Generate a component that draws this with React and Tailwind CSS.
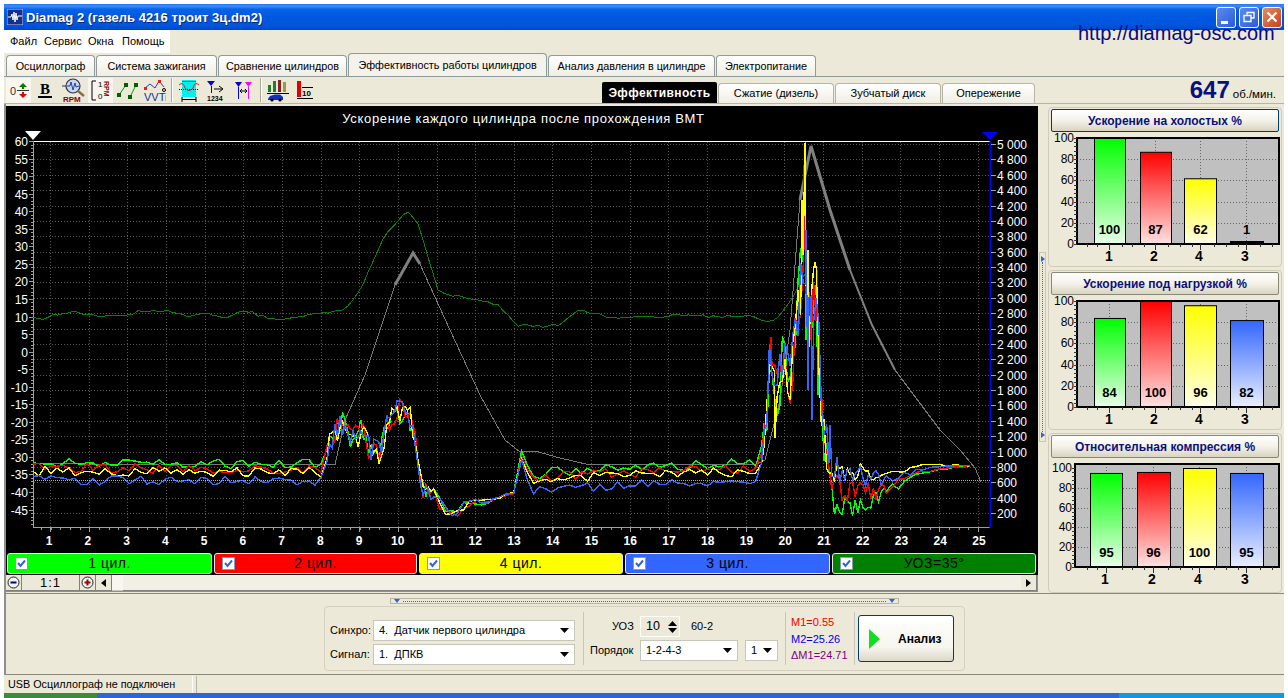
const tabs = [
  { label: 'Осциллограф', w: 89 },
  { label: 'Система зажигания', w: 121 },
  { label: 'Сравнение цилиндров', w: 129 },
  { label: 'Эффективность работы цилиндров', w: 199, active: true },
  { label: 'Анализ давления в цилиндре', w: 167 },
  { label: 'Электропитание', w: 100 },
];

const subTabs = [
  { label: 'Сжатие (дизель)', w: 116 },
  { label: 'Зубчатый диск', w: 106 },
  { label: 'Опережение', w: 93 },
];

const legend = [
  { label: '1 цил.', w: 'w-[205px]', bg: 'bg-[#00ff00]' },
  { label: '2 цил.', w: 'w-[203px]', bg: 'bg-[#ff0000]' },
  { label: '4 цил.', w: 'w-[204px]', bg: 'bg-[#ffff00]' },
  { label: '3 цил.', w: 'w-[205px]', bg: 'bg-[#3366ff]' },
  { label: 'УОЗ=35°', w: 'w-[204px]', bg: 'bg-[#008000]' },
];

// piecewise-linear lookup
const lerp = (pts, x) => {
  if (x <= pts[0][0]) return pts[0][1];
  for (let i = 1; i < pts.length; i++) {
    if (x <= pts[i][0]) {
      const [x0, y0] = pts[i - 1];
      const [x1, y1] = pts[i];
      return y0 + ((y1 - y0) * (x - x0)) / (x1 - x0);
    }
  }
  return pts[pts.length - 1][1];
};

const rng = (seed) => () => {
  seed = (seed + 0x6d2b79f5) | 0;
  let t = Math.imul(seed ^ (seed >>> 15), 1 | seed);
  t = (t + Math.imul(t ^ (t >>> 7), 61 | t)) ^ t;
  return ((t ^ (t >>> 14)) >>> 0) / 4294967296;
};

const envelope = [
  [33, 466], [322, 467], [330, 440], [345, 421], [353, 441], [362, 430], [370, 450], [380, 455], [387, 425],
  [397, 412], [407, 412], [415, 432], [417, 465], [423, 490], [433, 493], [443, 508], [457, 512], [467, 503],
  [480, 503], [500, 497], [517, 492], [520, 452], [533, 478], [553, 474], [760, 466], [767, 413], [770, 352],
  [777, 395], [783, 360], [790, 385], [797, 330], [805, 230], [809, 330], [817, 295], [820, 380], [823, 430],
  [830, 463], [835, 480], [853, 478], [873, 482], [893, 479], [920, 471], [953, 467], [977, 466],
];

const amplitude = [
  [33, 5], [322, 5], [335, 13], [410, 13], [420, 8], [470, 4], [500, 2], [517, 1], [520, 4], [545, 5], [760, 5],
  [770, 22], [800, 42], [815, 42], [830, 18], [850, 11], [895, 6], [920, 1.5], [977, 0.5],
];

const calm = [[33, 1], [322, 1], [332, 0], [517, 0], [530, 1], [756, 1], [768, 0], [977, 0]];

const cylinders = [
  {
    color: '#00ff00', seed: 11, calm: -3, after: [[825, 0], [833, 30], [850, 32], [880, 16], [910, 2], [977, 0]],
    spikes: [[803, 262], [806, 340], [818, 395]],
  },
  {
    color: '#ff0000', seed: 23, calm: 2, after: [[825, 0], [838, 12], [880, 10], [915, 1], [977, 0]],
    spikes: [[771, 337], [804, 165], [807, 300], [817, 270]],
  },
  {
    color: '#ffff00', seed: 37, calm: 5, after: [[825, 0], [840, -8], [890, -7], [960, -2], [977, 0]],
    spikes: [[775, 438], [802, 200], [805, 143], [808, 250], [815, 262], [818, 325]],
  },
  {
    color: '#3366ff', seed: 51, calm: 14, after: [[825, 0], [835, -12], [850, -4], [977, 0]],
    spikes: [[806, 230], [808, 390], [812, 420], [830, 425]],
  },
];

const tracePoints = ({ seed, calm: calmShift, after, spikes }) => {
  const rand = rng(seed);
  const pts = [];
  let x = 33;
  while (x < 977) {
    const amp = lerp(amplitude, x);
    const shift = lerp(calm, x) * calmShift + lerp(after, x);
    pts.push([x, lerp(envelope, x) + shift + (rand() - 0.5) * 2 * amp]);
    x += amp > 7 ? 2.6 : amp > 2 ? 6 : 8;
  }
  spikes.forEach((s) => pts.push(s));
  pts.sort((a, b) => a[0] - b[0]);
  return pts.map(([px, py]) => `${px.toFixed(1)},${Math.min(526, Math.max(143, py)).toFixed(1)}`).join(' ');
};

const rpmThin = '33,464 60,463 100,465 160,464 220,465 280,464 335,465 345,420 365,375 395,285';
const rpmThick1 = '395,285 413,253 420,264';
const rpmThin2 = '420,264 450,330 480,395 505,440 520,452 535,451 560,458 590,465 650,464 755,465 765,460 780,400 790,330 800,200';
const rpmThick2 = '800,200 811,146 830,210 850,270';
const rpmMid2 = '850,270 872,325 895,370';
const rpmThin3 = '895,370 940,430 960,450 975,468 981,482';

const uozPts = [
  [33, 318], [40, 320], [55, 315], [65, 312], [90, 314], [105, 317], [125, 316], [135, 312], [155, 312], [175, 312],
  [190, 317], [205, 313], [225, 318], [245, 311], [265, 317], [285, 320], [300, 316], [330, 312], [345, 310],
  [360, 290], [385, 235], [407, 211], [418, 225], [438, 290], [445, 295], [470, 298], [500, 305], [515, 325],
  [535, 327], [560, 325], [580, 310], [610, 317], [640, 318], [680, 315], [720, 317], [745, 315], [773, 322],
  [785, 310], [800, 283], [806, 270],
];
const uozRand = rng(77);
const uoz = Array.from({ length: 156 }, (_, i) => {
  const x = 33 + i * 5;
  return `${x},${(lerp(uozPts, x) + (uozRand() - 0.5) * 3).toFixed(1)}`;
}).join(' ');

const rightAxis = Array.from({ length: 25 }, (_, i) => 5000 - i * 200);
const leftAxis = Array.from({ length: 22 }, (_, i) => 60 - i * 5).filter((v) => v >= -45);
const yLeft = (v) => Math.round(141 + (60 - v) * 3.51);
const yRight = (i) => Math.round(144 + i * 15.38);
const xGrid = (i) => Math.round(50 + i * 38.65);

const MainChart = () => (
  <svg width="1032" height="423" viewBox="6 130 1032 423" className="block">
    {rightAxis.map((_, i) => (
      <line key={i} x1="34" x2="990" y1={yRight(i) + 0.5} y2={yRight(i) + 0.5} stroke="#5a5a5a" strokeDasharray="1 2" />
    ))}
    {Array.from({ length: 25 }, (_, i) => (
      <line key={i} x1={xGrid(i) + 0.5} x2={xGrid(i) + 0.5} y1="142" y2="527" stroke="#5a5a5a" strokeDasharray="1 2" />
    ))}
    <line x1="33" x2="991" y1="141.5" y2="141.5" stroke="#ffffff" />
    <line x1="33" x2="991" y1="527.5" y2="527.5" stroke="#a0a0a0" />
    <line x1="33.5" x2="33.5" y1="141" y2="528" stroke="#a0a0a0" strokeWidth="1" />
    <line x1="990.5" x2="990.5" y1="141" y2="528" stroke="#0000ff" strokeWidth="2" />
    {Array.from({ length: 110 }, (_, i) => (
      <line key={i} x1="31" x2="33" y1={Math.round(141 + i * 3.51) + 0.5} y2={Math.round(141 + i * 3.51) + 0.5} stroke="#a0a0a0" />
    ))}
    {Array.from({ length: 98 }, (_, i) => (
      <line key={i} x1={Math.round(41 + i * 9.66) + 0.5} x2={Math.round(41 + i * 9.66) + 0.5} y1="528" y2="530" stroke="#a0a0a0" />
    ))}
    {leftAxis.map((v) => (
      <g key={v}>
        <line x1="29" x2="33" y1={yLeft(v) + 0.5} y2={yLeft(v) + 0.5} stroke="#a0a0a0" />
        <text x="28" y={yLeft(v) + 4.5} textAnchor="end" fill="#ffffff" fontSize="12">{v}</text>
      </g>
    ))}
    {rightAxis.map((v, i) => (
      <g key={v}>
        <line x1="991" x2="996" y1={yRight(i) + 0.5} y2={yRight(i) + 0.5} stroke="#a0a0a0" />
        <text x="997" y={yRight(i) + 4.5} fill="#ffffff" fontSize="12">
          {v >= 1000 ? `${Math.floor(v / 1000)} ${String(v % 1000).padStart(3, '0')}` : v}
        </text>
      </g>
    ))}
    {Array.from({ length: 25 }, (_, i) => (
      <g key={i}>
        <line x1={xGrid(i) + 0.5} x2={xGrid(i) + 0.5} y1="528" y2="532" stroke="#a0a0a0" />
        <text x={49 + i * 38.75} y="545" textAnchor="middle" fill="#ffffff" fontSize="12" fontWeight="700">{i + 1}</text>
      </g>
    ))}

    <polyline points={rpmThin} fill="none" stroke="#787878" strokeWidth="1" shapeRendering="crispEdges" />
    <polyline points={rpmThin2} fill="none" stroke="#787878" strokeWidth="1" shapeRendering="crispEdges" />
    <polyline points={rpmThin3} fill="none" stroke="#787878" strokeWidth="1" shapeRendering="crispEdges" />
    <polyline points={rpmThick1} fill="none" stroke="#808080" strokeWidth="3" />
    <polyline points={rpmThick2} fill="none" stroke="#808080" strokeWidth="3" />
    <polyline points={rpmMid2} fill="none" stroke="#808080" strokeWidth="2" />
    <line x1="805.5" x2="805.5" y1="142" y2="180" stroke="#9a9a9a" />
    <polyline points={uoz} fill="none" stroke="#0a800a" strokeWidth="1" shapeRendering="crispEdges" />
    {cylinders.map((c) => (
      <polyline key={c.seed} points={tracePoints(c)} fill="none" stroke={c.color} strokeWidth="1.4" shapeRendering="crispEdges" />
    ))}
    <line x1="33" x2="990" y1="480.5" y2="480.5" stroke="#33ddff" strokeDasharray="1 1" />

    <polygon points="25,131 41,131 33,140" fill="#ffffff" />
    <polygon points="982,132 998,132 990,140" fill="#0000ff" />
  </svg>
);

const barFills = { g: 'url(#fillG)', r: 'url(#fillR)', y: 'url(#fillY)', b: 'url(#fillB)' };

const BarChart = ({ left, top, scaleTop, bottom, bars, id }) => {
  const h = bottom - scaleTop;
  return (
    <svg width="232" height="134" viewBox={`1049 ${top - 6} 232 134`} className="block">
      <rect x={left} y={top} width={1277 - left} height={bottom - top} fill="#c0c0c0" />
      {[80, 60, 40, 20].map((v) => {
        const y = Math.round(bottom - (v * h) / 100) + 0.5;
        return <line key={v} x1={left} x2="1277" y1={y} y2={y} stroke="#666666" strokeDasharray="1 2" />;
      })}
      {bars.map((b) => (
        <line key={b.x0} x1={b.vx + 0.5} x2={b.vx + 0.5} y1={top} y2={bottom} stroke="#666666" strokeDasharray="1 2" />
      ))}
      {bars.map((b) => {
        const y = b.v < 3 ? bottom - 3 : bottom - (b.v * h) / 100;
        return (
          <rect key={`${id}${b.x0}`} x={b.x0 + 0.5} y={y + 0.5} width={b.x1 - b.x0} height={Math.max(bottom - y - 1, 0.5)} fill={b.v < 3 ? '#000000' : barFills[b.c]} stroke="#000000" />
        );
      })}
      <rect x={left} y={top} width={1277 - left} height={bottom - top} fill="none" stroke="#000000" strokeWidth="2" />
      {Array.from({ length: 26 }, (_, i) => {
        const y = Math.round(bottom - (i * 4 * h) / 100) + 0.5;
        return <line key={i} x1={left - 3} x2={left} y1={y} y2={y} stroke="#333333" />;
      })}
      {[1085, 1095, 1120, 1130, 1142, 1166, 1178, 1190, 1212, 1224, 1236, 1258, 1270].map((x) => (
        <line key={x} x1={x + 0.5} x2={x + 0.5} y1={bottom} y2={bottom + 3} stroke="#333333" />
      ))}
      {[100, 80, 60, 40, 20, 0].map((v) => (
        <text key={v} x={left - 3} y={bottom - (v * h) / 100 + 4} textAnchor="end" fontSize="12" fill="#000000">{v}</text>
      ))}
      {bars.map((b) => (
        <g key={b.label}>
          <line x1={b.vx + 0.5} x2={b.vx + 0.5} y1={bottom} y2={bottom + 6} stroke="#333333" />
          <text x={b.vx + 0.5} y={bottom - 10} textAnchor="middle" fontSize="13" fontWeight="700" fill="#000000">{b.v}</text>
          <text x={b.lx} y={bottom + 17} textAnchor="middle" fontSize="14" fontWeight="700" fill="#000000">{b.label}</text>
        </g>
      ))}
    </svg>
  );
};

const Panel = ({ title, active, children }) => (
  <div className="h-[160px] rounded-[4px] border border-[#d0ccb8] px-[2px] pt-[1px]">
    <div
      className={`flex h-[23px] items-center justify-center rounded-[2px] border bg-[linear-gradient(180deg,#ffffff_0%,#f4f2e8_50%,#d8d4c0_100%)] text-[12px] font-bold text-[#0a1080] ${
        active ? 'border-[#003c74]' : 'border-[#8a8878]'
      }`}
    >
      {title}
    </div>
    {children}
  </div>
);

const barX = [
  { x0: 1092, x1: 1123, vx: 1107, lx: 1107, c: 'g', label: '1' },
  { x0: 1138, x1: 1169, vx: 1153, lx: 1152, c: 'r', label: '2' },
  { x0: 1182, x1: 1214, vx: 1198, lx: 1197, c: 'y', label: '4' },
  { x0: 1228, x1: 1261, vx: 1244, lx: 1243, c: 'b', label: '3' },
];
const barX3 = [
  { x0: 1088, x1: 1120, vx: 1104, lx: 1103, c: 'g', label: '1' },
  { x0: 1135, x1: 1168, vx: 1151, lx: 1150, c: 'r', label: '2' },
  { x0: 1181, x1: 1214, vx: 1197, lx: 1196, c: 'y', label: '4' },
  { x0: 1228, x1: 1261, vx: 1244, lx: 1243, c: 'b', label: '3' },
];
const withValues = (xs, vals) => xs.map((b, i) => ({ ...b, v: vals[i] }));

const Triangle = ({ className = '' }) => (
  <svg width="9" height="5" viewBox="0 0 9 5" className={className}><polygon points="0,0 9,0 4.5,5" fill="#000000" /></svg>
);

const Combo = ({ text, w }) => (
  <div className={`flex h-[21px] items-center justify-between border border-[#c8c6b8] bg-white pl-[5px] pr-[5px] text-[11px] text-black ${w}`}>
    <span className="whitespace-pre">{text}</span>
    <Triangle />
  </div>
);

const IconZero = () => (
  <svg width="24" height="24" viewBox="0 0 24 24">
    <text x="3" y="17" fontSize="11" fill="#333333">0</text>
    <polygon points="16,5 20,9 12,9" fill="#008000" />
    <rect x="15" y="9" width="2" height="2" fill="#008000" />
    <rect x="10" y="12" width="12" height="1" fill="#333333" />
    <rect x="15" y="14" width="2" height="2" fill="#e00000" />
    <polygon points="12,16 20,16 16,20" fill="#e00000" />
  </svg>
);

const IconBold = () => (
  <svg width="16" height="24" viewBox="0 0 16 24">
    <text x="8" y="16" textAnchor="middle" fontSize="15" fontWeight="700" fontFamily="'Liberation Serif', serif" fill="#000000">B</text>
    <rect x="1" y="18" width="14" height="2" fill="#000000" />
  </svg>
);

const IconRpm = () => (
  <svg width="24" height="26" viewBox="0 0 24 26">
    <circle cx="11" cy="9" r="7" fill="#c8d8f0" stroke="#303050" strokeWidth="1.2" />
    <path d="M5 9 L8 9 L9 5 L11 13 L13 6 L14 10 L17 9" fill="none" stroke="#2040a0" />
    <line x1="16" y1="14" x2="22" y2="19" stroke="#8a7040" strokeWidth="2.4" />
    <line x1="0" y1="9" x2="4" y2="9" stroke="#303050" />
    <text x="1" y="25" fontSize="8" fontWeight="700" fill="#8b0000">RPM</text>
  </svg>
);

const IconScale = () => (
  <svg width="24" height="24" viewBox="0 0 24 24">
    <path d="M7 3 H3 V22 H7" fill="none" stroke="#000000" />
    <text x="9" y="9" fontSize="8" fill="#000000">1</text>
    <text x="9" y="21" fontSize="8" fill="#000000">0</text>
    <text x="0" y="0" fontSize="7" fontWeight="700" fill="#8b0000" transform="translate(15 3) rotate(90)">RPM</text>
  </svg>
);

const IconLines = () => (
  <svg width="22" height="22" viewBox="0 0 22 22">
    <path d="M2 16 L9 6 M13 18 L19 6" fill="none" stroke="#00a000" />
    <g fill="#006000">
      <rect x="0" y="14" width="4" height="4" /><rect x="7" y="4" width="4" height="4" />
      <rect x="11" y="16" width="4" height="4" /><rect x="17" y="4" width="4" height="4" />
    </g>
  </svg>
);

const IconVvt = () => (
  <svg width="22" height="24" viewBox="0 0 22 24">
    <polyline points="1,10 6,6 11,10 15,3 20,9" fill="none" stroke="#2040c0" />
    <g fill="#e02020"><rect x="0" y="9" width="3" height="3" /><rect x="14" y="2" width="3" height="3" /></g>
    <circle cx="20" cy="12" r="1.5" fill="none" stroke="#000000" />
    <text x="0" y="23" fontSize="11" fill="#1030a0">VVTi</text>
  </svg>
);

const IconCyan = () => (
  <svg width="20" height="24" viewBox="0 0 20 24">
    <rect x="3" y="2" width="14" height="17" fill="#00f0f0" />
    <path d="M0 7 Q4 3 6 10 Q10 15 14 10 Q16 3 20 7" fill="none" stroke="#e02020" />
    <line x1="0" y1="11.5" x2="20" y2="11.5" stroke="#000000" strokeDasharray="1 1" />
    <path d="M3 3.5 H17" stroke="#00a000" />
    <path d="M3 19 V24 M17 19 V24 M3 21.5 H17" stroke="#000000" fill="none" />
  </svg>
);

const IconT1234 = () => (
  <svg width="18" height="24" viewBox="0 0 18 24">
    <polygon points="0,3 8,3 4,8" fill="#0000e0" />
    <line x1="4.5" y1="8" x2="4.5" y2="15" stroke="#0000e0" />
    <path d="M7 11 H15 M12 8 L16 11 L12 14" fill="none" stroke="#000000" />
    <text x="0" y="23" fontSize="7" fontWeight="700" fill="#000000">1234</text>
  </svg>
);

const IconTT = () => (
  <svg width="17" height="22" viewBox="0 0 17 22">
    <polygon points="0,3 7,3 3.5,8" fill="#0000e0" />
    <line x1="3.5" y1="8" x2="3.5" y2="20" stroke="#0000e0" />
    <polygon points="10,3 17,3 13.5,8" fill="#ff00ff" />
    <line x1="13.5" y1="8" x2="13.5" y2="20" stroke="#ff00ff" />
    <path d="M5 12 H12 M5 12 L7 10 M5 12 L7 14 M12 12 L10 10 M12 12 L10 14" fill="none" stroke="#000000" />
  </svg>
);

const IconCar = () => (
  <svg width="22" height="24" viewBox="0 0 22 24">
    <rect x="1" y="7" width="3" height="7" fill="#1f7f2f" />
    <rect x="6" y="3" width="3" height="11" fill="#1f7f2f" />
    <rect x="11" y="2" width="3" height="12" fill="#8b2020" />
    <rect x="16" y="4" width="3" height="10" fill="#9a9a40" />
    <line x1="0" y1="15.5" x2="22" y2="15.5" stroke="#000000" />
    <path d="M1 21 L3 18 L8 16.5 L13 16.5 L16 19 L16 22 L1 22 Z" fill="#1030c0" />
    <circle cx="5" cy="22" r="1.6" fill="#000000" /><circle cx="13" cy="22" r="1.6" fill="#000000" />
  </svg>
);

const IconTen = () => (
  <svg width="16" height="20" viewBox="0 0 16 20">
    <rect x="0" y="1" width="4" height="16" fill="#e00000" />
    <line x1="0" y1="18.5" x2="16" y2="18.5" stroke="#000000" />
    <line x1="5" y1="7.5" x2="16" y2="7.5" stroke="#000000" />
    <text x="5" y="16" fontSize="8" fontWeight="700" fill="#000000">10</text>
  </svg>
);

const Sep = ({ className = '' }) => <div className={`h-[24px] w-[2px] border-r border-white bg-[#aca899] ${className}`} />;

const Check = () => (
  <div className="flex h-[13px] w-[13px] shrink-0 items-center justify-center border border-[#7f9db9] bg-white">
    <svg width="9" height="9" viewBox="0 0 9 9"><path d="M1 4 L3.5 7 L8 1.5" fill="none" stroke="#3366cc" strokeWidth="2" /></svg>
  </div>
);

const ScrollBtn = ({ children, w = 'w-[16px]' }) => (
  <div className={`flex h-[16px] shrink-0 items-center justify-center border-b border-r border-[#808080] bg-[#ece9d8] ${w}`}>
    {children}
  </div>
);

const ZoomGlyph = ({ plus }) => (
  <svg width="13" height="13" viewBox="0 0 13 13">
    <circle cx="6.5" cy="6.5" r="5.5" fill="#f4f4f4" stroke="#202020" />
    <rect x="3.5" y="5.5" width="6" height="2" fill={plus ? '#a00000' : '#000080'} />
    {plus && <rect x="5.5" y="3.5" width="2" height="6" fill="#a00000" />}
  </svg>
);

const App = () => (
  <div className="relative flex h-[698px] w-[1288px] flex-col overflow-hidden bg-white px-1 pt-1 font-['Liberation_Sans',Arial,sans-serif]">
    <svg width="0" height="0" className="absolute">
      <defs>
        <linearGradient id="fillG" x1="0" x2="0" y1="0" y2="1"><stop offset="0" stopColor="#00ff00" /><stop offset="1" stopColor="#e8ffe8" /></linearGradient>
        <linearGradient id="fillR" x1="0" x2="0" y1="0" y2="1"><stop offset="0" stopColor="#ff0000" /><stop offset="1" stopColor="#ffe0e0" /></linearGradient>
        <linearGradient id="fillY" x1="0" x2="0" y1="0" y2="1"><stop offset="0" stopColor="#ffff00" /><stop offset="1" stopColor="#ffffe8" /></linearGradient>
        <linearGradient id="fillB" x1="0" x2="0" y1="0" y2="1"><stop offset="0" stopColor="#3366ff" /><stop offset="1" stopColor="#e8eeff" /></linearGradient>
      </defs>
    </svg>

    {/* Title bar */}
    <div className="flex h-[26px] shrink-0 items-center bg-[linear-gradient(180deg,#1f74f0_0%,#3a90fa_8%,#0a62e8_20%,#0058e0_50%,#0056de_80%,#0048c8_100%)] pl-[3px] pr-[2px]">
      <svg width="16" height="16" viewBox="0 0 16 16" className="shrink-0">
        <rect width="16" height="16" fill="#16308a" stroke="#c0c8e8" />
        <path d="M1 8 H4 L5 5 L6 11 L7 3 L8 13 L9 4 L10 11 L11 7 H15" fill="none" stroke="#ffffff" />
      </svg>
      <span className="ml-[3px] whitespace-nowrap pt-[1px] text-[13px] font-bold tracking-[0.05px] text-white [text-shadow:1px_1px_0_#0a2a80]">
        Diamag 2 (газель 4216 троит 3ц.dm2)
      </span>
      <div className="ml-auto flex gap-[3px]">
        <div className="flex h-[21px] w-[20px] items-end rounded-[3px] border border-white bg-[linear-gradient(135deg,#5a8cf0,#2c5ad8)] pb-[3px] pl-[4px]">
          <div className="h-[3px] w-[7px] bg-white" />
        </div>
        <div className="flex h-[21px] w-[20px] items-center justify-center rounded-[3px] border border-white bg-[linear-gradient(135deg,#5a8cf0,#2c5ad8)]">
          <svg width="12" height="12" viewBox="0 0 12 12"><path d="M4 3.5 V1.5 H11 V7 H8.5 M1 4.5 H8 V10.5 H1 Z" fill="none" stroke="#ffffff" strokeWidth="1.3" /></svg>
        </div>
        <div className="flex h-[21px] w-[20px] items-center justify-center rounded-[3px] border border-white bg-[linear-gradient(135deg,#e88a60,#c8401c)]">
          <svg width="12" height="12" viewBox="0 0 12 12"><path d="M1.5 1.5 L10.5 10.5 M10.5 1.5 L1.5 10.5" stroke="#ffffff" strokeWidth="2.2" /></svg>
        </div>
      </div>
    </div>

    <div className="absolute left-[1078px] top-[22px] whitespace-nowrap text-[20px] leading-[22px] text-[#0a0a80]">http://diamag-osc.com</div>

    <div className="flex h-[663px] shrink-0 flex-col bg-[#ece9d8] text-black">
      {/* Menu */}
      <div className="flex h-[23px] w-[166px] shrink-0 items-center bg-white pl-[6px] text-[11px]">
        <span className="w-[34px]">Файл</span>
        <span className="w-[44px]">Сервис</span>
        <span className="w-[34px]">Окна</span>
        <span>Помощь</span>
      </div>

      {/* Tabs */}
      <div className="flex h-[24px] shrink-0 items-end gap-[1px] border-b border-[#8f9a9a] pl-[2px]">
        {tabs.map((t) => (
          <div
            key={t.label}
            style={{ width: t.w }}
            className={`flex items-center justify-center whitespace-nowrap rounded-t-[4px] border border-b-0 border-[#8f9a9a] pt-[1px] text-[10.8px] ${
              t.active ? 'h-[23px] bg-[#f4f2ea]' : 'h-[21px] bg-[linear-gradient(180deg,#ffffff,#f0eee2)]'
            }`}
          >
            {t.label}
          </div>
        ))}
      </div>

      {/* Toolbar */}
      <div className="flex h-[27px] shrink-0 items-center border-b border-[#b8b5a4] pl-[2px]">
        <div className="flex h-[25px] w-[25px] items-center justify-center bg-[#f8f6ee]"><IconZero /></div>
        <div className="ml-[6px] w-[16px]"><IconBold /></div>
        <div className="ml-[9px] w-[24px]"><IconRpm /></div>
        <div className="ml-[2px] flex h-[25px] w-[25px] items-center justify-center bg-[#f8f6ee]"><IconScale /></div>
        <div className="ml-[4px] w-[22px]"><IconLines /></div>
        <div className="ml-[5px] w-[22px]"><IconVvt /></div>
        <Sep className="ml-[5px]" />
        <div className="ml-[6px] w-[20px]"><IconCyan /></div>
        <div className="ml-[8px] w-[18px]"><IconT1234 /></div>
        <div className="ml-[10px] w-[17px]"><IconTT /></div>
        <Sep className="ml-[8px]" />
        <div className="ml-[5px] w-[22px]"><IconCar /></div>
        <div className="ml-[8px] w-[16px]"><IconTen /></div>

        <div className="ml-[289px] flex h-[21px] w-[115px] items-center justify-center self-end rounded-t-[2px] bg-black text-[12px] font-bold tracking-[0.4px] text-white">Эффективность</div>
        {subTabs.map((t) => (
          <div
            key={t.label}
            style={{ width: t.w }}
            className="ml-[1px] flex h-[20px] items-center justify-center self-end rounded-t-[4px] border border-b-0 border-[#b8b5a4] bg-[linear-gradient(180deg,#ffffff,#f0eee2)] text-[11px]"
          >
            {t.label}
          </div>
        ))}
        <div className="ml-auto flex items-baseline pr-[8px] text-[#0a1080]">
          <span className="text-[24px] font-bold leading-[26px]">647</span>
          <span className="ml-[3px] text-[11.5px] text-black">об./мин.</span>
        </div>
      </div>

      {/* Main area */}
      <div className="flex h-[489px] shrink-0">
        <div className="flex w-[1034px] shrink-0 flex-col border-l-2 border-[#909090] pt-[2px]">
          <div className="bg-black">
            <div className="flex h-[24px] items-center justify-center pl-[3px] pt-[1px] text-[13px] tracking-[0.65px] text-white">
              Ускорение каждого цилиндра после прохождения ВМТ
            </div>
            <MainChart />
            <div className="flex h-[22px] gap-[2px] pl-[1px]">
              {legend.map((l) => (
                <div key={l.label} className={`flex h-[21px] items-center rounded-[3px] border border-[#e8e8e8] pl-[7px] ${l.w} ${l.bg}`}>
                  <Check />
                  <span className="flex-1 pr-[20px] text-center text-[14px] tracking-[0.5px] text-black">{l.label}</span>
                </div>
              ))}
            </div>
          </div>
          <div className="flex h-[17px] shrink-0 items-start border-b border-r border-[#909090]">
            <ScrollBtn><ZoomGlyph /></ScrollBtn>
            <div className="flex h-[16px] w-[58px] shrink-0 items-center justify-center border-b border-r border-[#808080] bg-[#ece9d8] text-[13px] tracking-[1px]">1:1</div>
            <ScrollBtn><ZoomGlyph plus /></ScrollBtn>
            <ScrollBtn>
              <svg width="5" height="8" viewBox="0 0 5 8"><polygon points="5,0 5,8 0,4" fill="#000000" /></svg>
            </ScrollBtn>
            <div className="h-[16px] w-[11px] shrink-0 border-b border-[#c8c6b8] bg-[#f8f6f0]" />
            <div className="h-[16px] flex-1 border-b border-[#808080] bg-[#f2f0e4]" />
            <ScrollBtn>
              <svg width="5" height="8" viewBox="0 0 5 8"><polygon points="0,0 0,8 5,4" fill="#000000" /></svg>
            </ScrollBtn>
          </div>
        </div>

        {/* Vertical splitter */}
        <div className="ml-[1px] mt-[148px] flex h-[190px] w-[7px] shrink-0 flex-col items-center justify-between border border-[#c8c6b8] py-[3px]">
          <svg width="4" height="6" viewBox="0 0 4 6"><polygon points="0,0 4,3 0,6" fill="#3366cc" /></svg>
          <div className="flex-1 border-l border-dotted border-[#3366cc]" />
          <svg width="4" height="6" viewBox="0 0 4 6"><polygon points="0,0 4,3 0,6" fill="#3366cc" /></svg>
        </div>

        {/* Bar panels */}
        <div className="ml-[2px] flex w-[234px] shrink-0 flex-col gap-[3px] pt-[3px]">
          <Panel title="Ускорение на холостых %" active>
            <BarChart id="a" left={1075} top={138} scaleTop={138} bottom={244} bars={withValues(barX, [100, 87, 62, 1])} />
          </Panel>
          <Panel title="Ускорение под нагрузкой %">
            <BarChart id="b" left={1075} top={301} scaleTop={301} bottom={407} bars={withValues(barX, [84, 100, 96, 82])} />
          </Panel>
          <Panel title="Относительная компрессия %">
            <BarChart id="c" left={1073} top={464} scaleTop={468} bottom={567} bars={withValues(barX3, [95, 96, 100, 95])} />
          </Panel>
        </div>
      </div>

      {/* Analysis controls */}
      <div className="flex h-[82px] shrink-0 flex-col border-b border-l-2 border-t border-b-[#8a8878] border-l-[#909090] border-t-[#8a8878]">
        <div className="ml-[384px] mt-[4px] flex h-[6px] w-[509px] shrink-0 items-center justify-between border border-[#b8b5a4] px-[3px]">
          <svg width="6" height="4" viewBox="0 0 6 4"><polygon points="0,0 6,0 3,4" fill="#3366cc" /></svg>
          <div className="mx-[3px] flex-1 border-t border-dotted border-[#3366cc]" />
          <svg width="6" height="4" viewBox="0 0 6 4"><polygon points="0,0 6,0 3,4" fill="#3366cc" /></svg>
        </div>
        <div className="ml-[318px] mt-[2px] flex h-[65px] w-[641px] shrink-0 rounded-[4px] border border-[#d4d0bc] pt-[9px] text-[11px]">
          <div className="mt-[4px] flex w-[258px] shrink-0 flex-col gap-[3px] pl-[5px]">
            <div className="flex items-center">
              <span className="w-[43px]">Синхро:</span>
              <Combo w="w-[202px]" text="4.  Датчик первого цилиндра" />
            </div>
            <div className="flex items-center">
              <span className="w-[43px]">Сигнал:</span>
              <Combo w="w-[202px]" text="1.  ДПКВ" />
            </div>
          </div>
          <div className="mb-[5px] mt-[-4px] w-[1px] shrink-0 bg-[#c8c6b8]" />
          <div className="flex w-[201px] shrink-0 flex-col gap-[3px] pl-[6px]">
            <div className="flex h-[21px] items-center">
              <span className="w-[50px] pl-[22px]">УОЗ</span>
              <div className="flex h-[21px] w-[40px] items-center justify-between border border-white bg-[#ece9d8] pl-[5px] pr-[2px] text-[12.5px]">
                10
                <div className="flex flex-col gap-[2px]">
                  <svg width="9" height="5" viewBox="0 0 9 5"><polygon points="0,5 9,5 4.5,0" fill="#000000" /></svg>
                  <Triangle />
                </div>
              </div>
              <span className="ml-[11px]">60-2</span>
            </div>
            <div className="flex h-[21px] items-center">
              <span className="w-[50px]">Порядок</span>
              <Combo w="w-[98px]" text="1-2-4-3" />
              <Combo w="ml-[7px] w-[33px]" text="1" />
            </div>
          </div>
          <div className="mb-[5px] mt-[-4px] w-[1px] shrink-0 bg-[#c8c6b8]" />
          <div className="flex w-[68px] shrink-0 flex-col gap-[3.5px] pl-[5px] text-[11px] leading-[13px]">
            <span className="text-[#f00000]">M1=0.55</span>
            <span className="text-[#0000e8]">M2=25.26</span>
            <span className="text-[#800080]">ΔM1=24.71</span>
          </div>
          <div className="mb-[5px] mt-[-4px] w-[1px] shrink-0 bg-[#c8c6b8]" />
          <div className="ml-[3px] mt-[-1px] flex h-[47px] w-[96px] shrink-0 items-center rounded-[3px] border border-[#003c74] bg-[linear-gradient(180deg,#ffffff_0%,#f6f5ee_70%,#dcd8c8_100%)] pl-[10px]">
            <svg width="11" height="20" viewBox="0 0 11 20"><polygon points="0,0 11,10 0,20" fill="#10e020" /></svg>
            <span className="ml-[18px] text-[12px] font-bold">Анализ</span>
          </div>
        </div>
      </div>

      {/* Status bar */}
      <div className="flex h-[18px] shrink-0 items-center text-[10.8px]">
        <div className="flex h-[17px] w-[189px] items-center border-r border-white pl-[4px]">USB Осциллограф не подключен</div>
        <div className="ml-[3px] h-[17px] flex-1 border-l border-[#b8b5a4]" />
      </div>
    </div>

    {/* Taskbar sliver */}
    <div className="flex h-[5px] shrink-0">
      <div className="w-[93px] bg-[#3c8a3c]" />
      <div className="w-[1022px] bg-[#2a68d8]" />
      <div className="flex-1 bg-[#1098e0]" />
    </div>
  </div>
);

export default App;
